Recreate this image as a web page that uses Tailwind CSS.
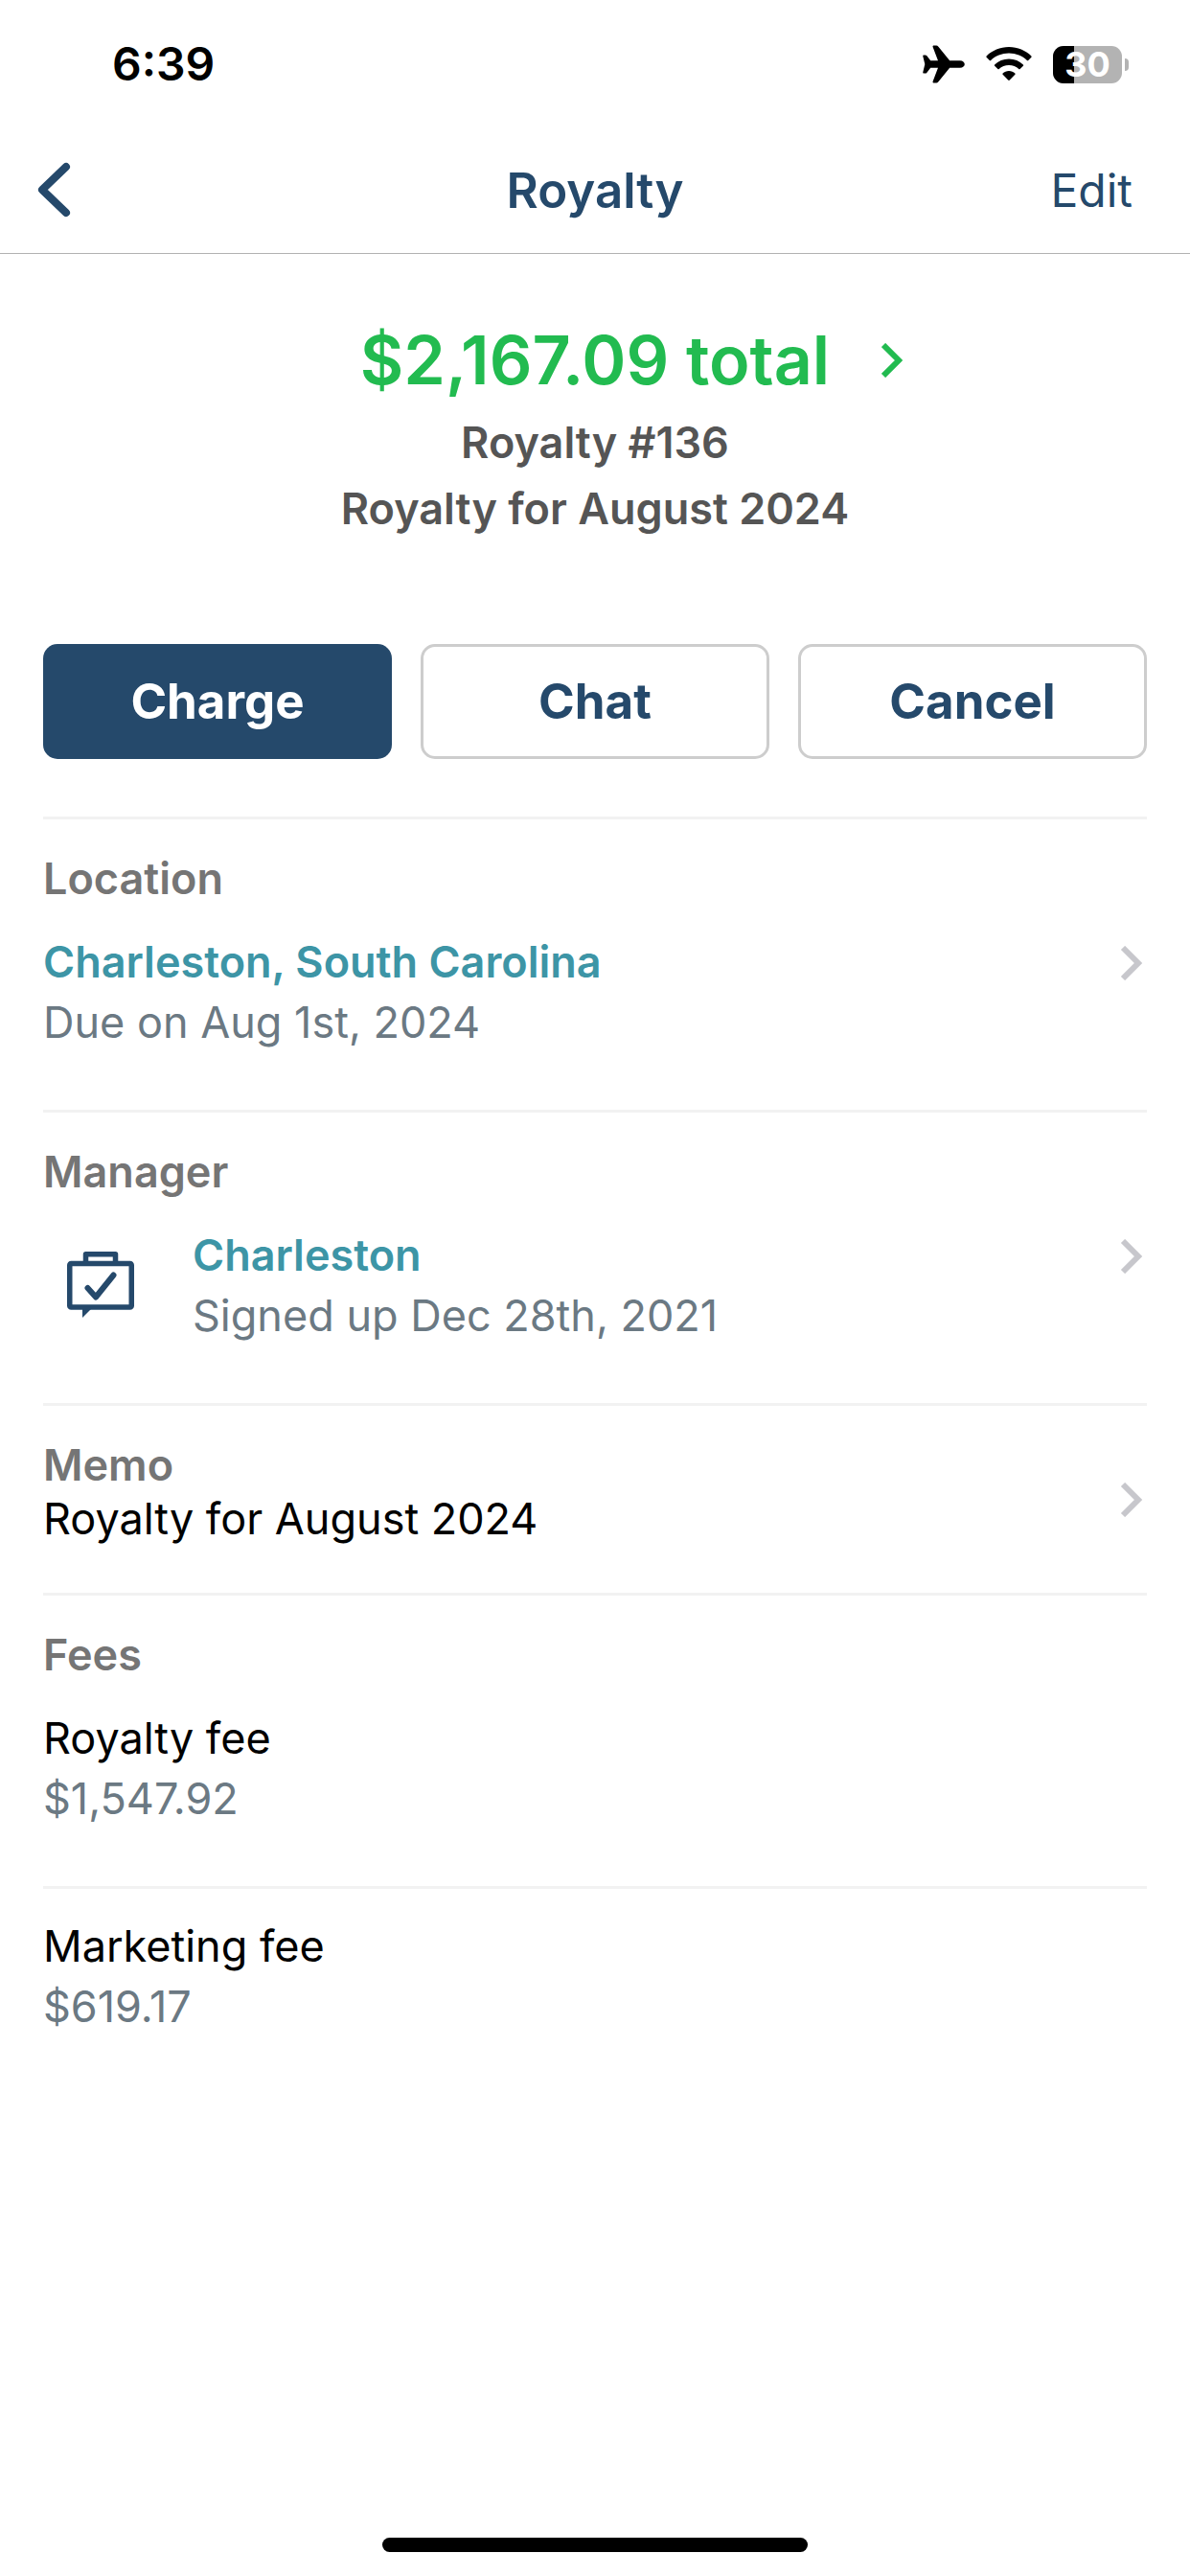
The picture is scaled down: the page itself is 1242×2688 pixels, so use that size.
<!DOCTYPE html>
<html lang="en">
<head>
  <meta charset="UTF-8" />
  <meta name="viewport" content="width=device-width, initial-scale=1.0" />
  <title>Royalty</title>
  <script src="https://cdn.jsdelivr.net/npm/@tailwindcss/browser@4"></script>
</head>

<body class="min-h-screen bg-white text-black font-[Inter,sans-serif] text-[45px] leading-[54px] flex flex-col">
  <!-- Status bar -->
  <div class="flex h-[134px] items-center justify-between pl-[117px] pr-[64px]">
    <span class="text-[48px] font-semibold">6:39</span>
    <div class="flex items-center gap-[22px]">
      <svg class="h-[40px] w-[44px]" viewBox="0 0 44 40" aria-hidden="true">
        <path d="M39 16.2c2.900 0 4.800 1.900 4.800 3.800s-1.900 3.800-4.800 3.800H28.200L16.400 38.200c-.7.8-1.300 1.200-2.200 1.200h-2.600c-.9 0-1.300-.6-1-1.500l5.400-14.100H8.200l-3.800 5c-.5.6-.9.8-1.700.8H1.300c-.8 0-1.200-.5-1-1.300L2.300 20 .3 11.700c-.2-.8.2-1.300 1-1.300h1.400c.8 0 1.200.2 1.700.8l3.800 5H16L10.600 2.100c-.3-.9.100-1.500 1-1.500h2.600c.9 0 1.500.4 2.200 1.200l11.800 14.400z" />
      </svg>
      <svg class="h-[38px] w-[48px]" viewBox="0 0 48 38" aria-hidden="true">
        <path d="M24 1C14.700 1 6.600 4.600.6 10.400c-.4.400-.4.900 0 1.300l3.200 3.300c.4.400.9.400 1.300 0C9.900 10.500 16.600 7.600 24 7.600s14.100 2.900 18.900 7.400c.4.400.9.400 1.300 0l3.200-3.300c.4-.4.400-.9 0-1.300C41.400 4.600 33.300 1 24 1z" />
        <path d="M24 13.400c-5.900 0-11 2.300-14.900 6-.4.400-.4.900 0 1.300l3.300 3.300c.4.400.9.400 1.300 0 2.700-2.400 6.300-3.900 10.300-3.900s7.600 1.500 10.300 3.900c.4.400.9.400 1.300 0l3.300-3.300c.4-.4.400-.9 0-1.300-3.900-3.700-9-6-14.900-6z" />
        <path d="M24 26c-2.500 0-4.700 1-6.400 2.400-.4.400-.4.900 0 1.300l5.600 5.900c.5.500 1.100.5 1.600 0l5.600-5.900c.4-.4.400-.9 0-1.300C28.700 27 26.500 26 24 26z" />
      </svg>
      <div class="flex items-center gap-[3px]">
        <div class="relative h-[39px] w-[72px] rounded-[11px] bg-[#b3b3b3]">
          <div class="h-full rounded-l-[11px] bg-black" style="width: 30%"></div>
          <span class="absolute inset-0 text-center text-[36px] leading-[39px] font-bold text-white">30</span>
        </div>
        <div class="h-[13px] w-[4px] rounded-r-full bg-[#b3b3b3]"></div>
      </div>
    </div>
  </div>

  <!-- Nav bar -->
  <header class="grid h-[131px] grid-cols-3 items-center border-b border-[#b2b2b2] pl-[36px] pr-[60px] text-[#25496b]">
    <button type="button" aria-label="Back" class="justify-self-start">
      <svg class="h-[60px] w-[40px]" viewBox="0 0 40 60" fill="none" stroke="currentColor" stroke-width="8" stroke-linecap="round" stroke-linejoin="round" aria-hidden="true">
        <path d="M33 5L8 29L33 53" />
      </svg>
    </button>
    <h1 class="ml-[24px] text-center text-[51px] font-semibold">Royalty</h1>
    <button type="button" class="justify-self-end text-[48px]">Edit</button>
  </header>

  <main class="px-[45px]">
    <!-- Summary -->
    <section class="pt-[70px] text-center font-semibold text-[#555555]">
      <a href="#" class="grid grid-cols-[1fr_auto_1fr] items-center text-[70px] leading-[82px] text-[#22bb50]">
        <span class="col-start-2">$2,167.09 total</span>
        <svg class="ml-[54px] h-[36px] w-[22px]" viewBox="0 0 22 36" fill="none" stroke="currentColor" stroke-width="6" aria-hidden="true">
          <path d="M2 2L18 18L2 34" />
        </svg>
      </a>
      <p class="mt-[10px] leading-[69px]">Royalty #136</p>
      <p class="leading-[69px]">Royalty for August 2024</p>
    </section>

    <!-- Actions -->
    <div class="mt-[107px] mb-[60px] grid grid-cols-3 gap-[30px] text-[51px] font-bold text-[#25496b]">
      <button type="button" class="h-[120px] rounded-[15px] bg-[#25496b] text-white">Charge</button>
      <button type="button" class="h-[120px] rounded-[15px] border-3 border-[#cdcdcd]">Chat</button>
      <button type="button" class="h-[120px] rounded-[15px] border-3 border-[#cdcdcd]">Cancel</button>
    </div>

    <section class="border-t-3 border-[#f2f2f2] pt-[35px] pb-[60px]">
      <h2 class="font-semibold text-[#757575]">Location</h2>
      <a href="#" class="mt-[28px] flex items-start leading-[63px]">
        <div class="flex-1">
          <p class="font-semibold text-[#3d95a6]">Charleston, South Carolina</p>
          <p class="text-[#6b7983]">Due on Aug 1st, 2024</p>
        </div>
        <svg class="mt-[15px] mr-[4px] h-[36px] w-[24px] text-[#c7c7cc]" viewBox="0 0 24 36" fill="none" stroke="currentColor" stroke-width="6" aria-hidden="true">
          <path d="M3 2L19 18L3 34" />
        </svg>
      </a>
    </section>

    <section class="border-t-3 border-[#f2f2f2] pt-[35px] pb-[60px]">
      <h2 class="font-semibold text-[#757575]">Manager</h2>
      <a href="#" class="mt-[28px] flex items-start leading-[63px]">
        <!-- Briefcase speech bubble -->
        <svg class="mt-[28px] ml-[25px] mr-[61px] h-[70px] w-[70px] text-[#25496b]" viewBox="0 0 70 70" fill="none" stroke="currentColor" stroke-width="5.500" stroke-linejoin="round" aria-hidden="true">
          <rect x="2.750" y="12.500" width="64.500" height="45.500" rx="1.500" />
          <path d="M19.500 12V2.750H50.500V12" />
          <path d="M21.500 38L30 47.500L48.500 24.500" stroke-width="6" stroke-linecap="round" />
          <path d="M16 59H26L16 69Z" fill="currentColor" stroke="none" />
        </svg>
        <div class="flex-1">
          <p class="font-semibold text-[#3d95a6]">Charleston</p>
          <p class="text-[#6b7983]">Signed up Dec 28th, 2021</p>
        </div>
        <svg class="mt-[15px] mr-[4px] h-[36px] w-[24px] text-[#c7c7cc]" viewBox="0 0 24 36" fill="none" stroke="currentColor" stroke-width="6" aria-hidden="true">
          <path d="M3 2L19 18L3 34" />
        </svg>
      </a>
    </section>

    <section class="border-t-3 border-[#f2f2f2]">
      <a href="#" class="flex items-center">
        <div class="flex-1 pt-[35px] pb-[48px]">
          <h2 class="font-semibold text-[#757575]">Memo</h2>
          <p class="leading-[58px]">Royalty for August 2024</p>
        </div>
        <svg class="mr-[4px] h-[36px] w-[24px] text-[#c7c7cc]" viewBox="0 0 24 36" fill="none" stroke="currentColor" stroke-width="6" aria-hidden="true">
          <path d="M3 2L19 18L3 34" />
        </svg>
      </a>
    </section>

    <section class="border-t-3 border-[#f2f2f2] pt-[35px]">
      <h2 class="font-semibold text-[#757575]">Fees</h2>
      <dl class="leading-[63px]">
        <div class="pt-[28px] pb-[60px]">
          <dt>Royalty fee</dt>
          <dd class="text-[#6b7983]">$1,547.92</dd>
        </div>
        <div class="border-t-3 border-[#f2f2f2] pt-[28px] pb-[60px]">
          <dt>Marketing fee</dt>
          <dd class="text-[#6b7983]">$619.17</dd>
        </div>
      </dl>
    </section>
  </main>

  <!-- Home indicator -->
  <div class="mx-auto mt-auto mb-[25px] h-[15px] w-[444px] rounded-full bg-black"></div>
</body>
</html>
